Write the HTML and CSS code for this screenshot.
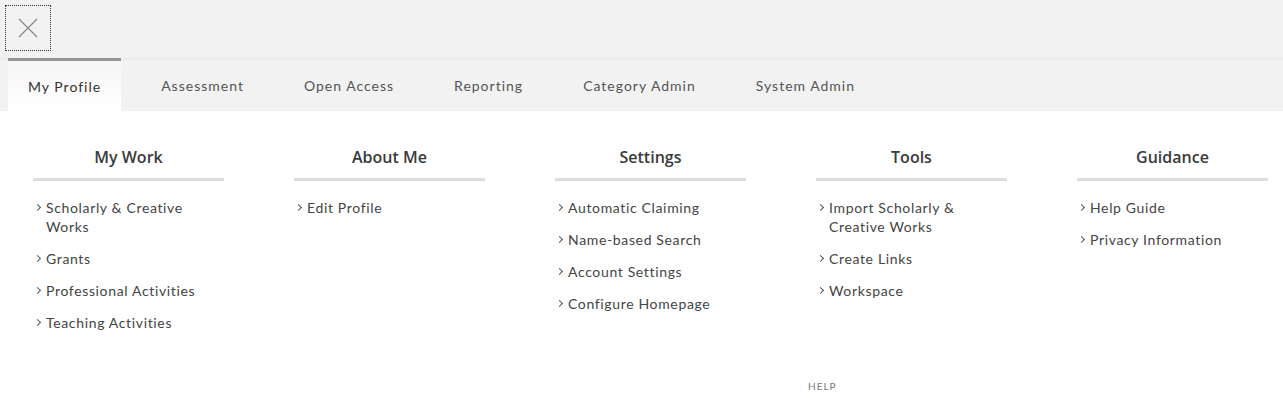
FILE: index.html
```html
<!DOCTYPE html>
<html lang="en">
<head>
  <meta charset="UTF-8" />
  <title>Menu</title>
  <link rel="stylesheet" href="styles.css">
</head>
<body>
  <header class="topbar">
    <button class="close-btn" aria-label="Close">
      <svg width="20" height="20" viewBox="0 0 20 20">
        <path d="M1 1 L19 19 M19 1 L1 19" stroke="#8a8a8a" stroke-width="1.3" fill="none"/>
      </svg>
    </button>
  </header>

  <nav class="tabs">
    <a class="tab active" href="#">My Profile</a>
    <a class="tab" href="#">Assessment</a>
    <a class="tab" href="#">Open Access</a>
    <a class="tab" href="#">Reporting</a>
    <a class="tab" href="#">Category Admin</a>
    <a class="tab" href="#">System Admin</a>
  </nav>

  <main class="menu">
    <section class="col">
      <h2>My Work</h2>
      <ul>
        <li><a href="#">Scholarly &amp; Creative Works</a></li>
        <li><a href="#">Grants</a></li>
        <li><a href="#">Professional Activities</a></li>
        <li><a href="#">Teaching Activities</a></li>
      </ul>
    </section>
    <section class="col">
      <h2>About Me</h2>
      <ul>
        <li><a href="#">Edit Profile</a></li>
      </ul>
    </section>
    <section class="col">
      <h2>Settings</h2>
      <ul>
        <li><a href="#">Automatic Claiming</a></li>
        <li><a href="#">Name-based Search</a></li>
        <li><a href="#">Account Settings</a></li>
        <li><a href="#">Configure Homepage</a></li>
      </ul>
    </section>
    <section class="col">
      <h2>Tools</h2>
      <ul>
        <li><a href="#">Import Scholarly &amp; Creative Works</a></li>
        <li><a href="#">Create Links</a></li>
        <li><a href="#">Workspace</a></li>
      </ul>
    </section>
    <section class="col">
      <h2>Guidance</h2>
      <ul>
        <li><a href="#">Help Guide</a></li>
        <li><a href="#">Privacy Information</a></li>
      </ul>
    </section>
  </main>

  <footer class="help">HELP</footer>
</body>
</html>
```

FILE: styles.css
```css
body {
  margin: 0;
  background: #fff;
  font-family: 'Lato', 'Liberation Sans', sans-serif;
  color: #444;
}

.topbar {
  height: 58px;
  background: #f2f2f2;
  padding: 5px;
  box-sizing: border-box;
  position: relative;
  z-index: 2;
  box-shadow: 0 1px 3px rgba(0,0,0,0.06);
}

.close-btn {
  width: 46px;
  height: 46px;
  border: 1px dotted #333;
  background: transparent;
  padding: 0;
  display: flex;
  align-items: center;
  justify-content: center;
}

.tabs {
  display: flex;
  background: #f2f2f2;
  height: 53px;
  padding-left: 8px;
}

.tab {
  display: flex;
  align-items: center;
  padding: 1px 20px 0;
  margin-right: 20px;
  font-size: 14px;
  letter-spacing: 1px;
  color: #555;
  text-decoration: none;
}

.tab.active {
  border-top: 3px solid #999;
  background: linear-gradient(to bottom, #f6f6f6, #fff);
  color: #333;
  padding-top: 0;
}

.menu {
  display: flex;
  gap: 70px;
  padding: 35px 0 0 33px;
}

.col {
  width: 191px;
}

.col h2 {
  margin: 0;
  text-align: center;
  font-family: 'Open Sans', sans-serif;
  font-weight: 600;
  font-size: 16px;
  color: #3a3a3a;
  padding-bottom: 10px;
  border-bottom: 3px solid #ddd;
}

.col ul {
  list-style: none;
  margin: 0;
  padding: 17px 0 0 2px;
}

.col li {
  position: relative;
  padding-left: 11px;
  margin-bottom: 13px;
  font-size: 14px;
  line-height: 19px;
  letter-spacing: 0.65px;
}

.col li::before {
  content: "";
  position: absolute;
  left: 0;
  top: 7px;
  width: 4px;
  height: 4px;
  border-top: 1px solid #555;
  border-right: 1px solid #555;
  transform: rotate(45deg);
}

.col li a {
  color: #444;
  text-decoration: none;
  display: block;
  padding-right: 24px;
}

.help {
  position: absolute;
  left: 808px;
  top: 380px;
  font-size: 10px;
  letter-spacing: 1px;
  color: #777;
}
```
